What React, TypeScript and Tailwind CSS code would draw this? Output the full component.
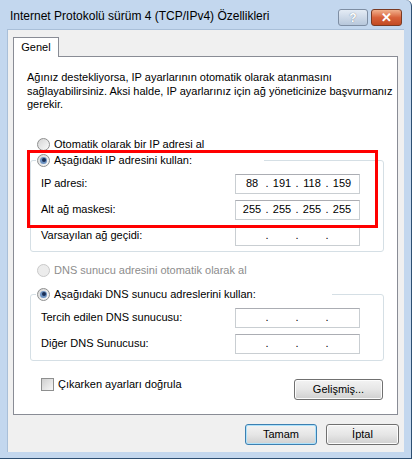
import type { ReactNode } from "react";

function Radio({ checked = false, disabled = false }: { checked?: boolean; disabled?: boolean }) {
  return (
    <span
      className={`flex h-[13px] w-[13px] shrink-0 items-center justify-center rounded-full border ${
        disabled
          ? "border-[#c9c9c9] bg-[#ececec]"
          : "border-[#8e8f8f] bg-gradient-to-br from-[#d5d5d5] to-[#fbfbfb]"
      }`}
    >
      {checked && (
        <span className="flex h-[7px] w-[7px] items-center justify-center rounded-full bg-[#6d93c2]">
          <span className="h-[4px] w-[4px] rounded-full bg-[#1a2f55]" />
        </span>
      )}
    </span>
  );
}

function IpInput({ parts }: { parts?: string[] }) {
  const p = parts ?? ["", "", "", ""];
  return (
    <div className="flex h-[20px] w-[125px] items-center border border-[#c9ced2] border-t-[#abadb3] bg-white pl-[4px] text-[11px] text-black">
      {p.map((v, i) => (
        <div key={i} className="flex items-center">
          <span className="w-[24px] text-center">{v}</span>
          {i < 3 && <span className="w-[6px] text-center">.</span>}
        </div>
      ))}
    </div>
  );
}

function Row({ label, parts }: { label: string; parts?: string[] }) {
  return (
    <div className="flex h-[20px] items-center justify-between pl-[10px] pr-[23px]">
      <span>{label}</span>
      <IpInput parts={parts} />
    </div>
  );
}

function Group({ title, legendWidth, children }: { title: string; legendWidth: string; children: ReactNode }) {
  return (
    <fieldset className="ml-[3px] w-[354px] rounded-[3px] border border-[#d5dfe5]">
      <legend className={`ml-[5px] flex h-[15px] items-center gap-[4px] bg-white pl-[1px] ${legendWidth}`}>
        <Radio checked />
        <span>{title}</span>
      </legend>
      {children}
    </fieldset>
  );
}

function WinButton({ label, primary = false, className = "" }: { label: string; primary?: boolean; className?: string }) {
  return (
    <button
      className={`flex h-[21px] items-center justify-center rounded-[3px] border bg-gradient-to-b from-[#f3f3f3] via-[#e6e6e6] to-[#d0d0d0] text-[11px] text-black ${
        primary ? "border-[#3c7fb1] shadow-[inset_0_0_0_1px_#aee2fb]" : "border-[#707070] shadow-[inset_0_0_0_1px_#fcfcfc]"
      } ${className}`}
    >
      {label}
    </button>
  );
}

export default function App() {
  return (
    <div className="h-[460px] w-[414px] bg-white font-['Liberation_Sans',Arial,sans-serif] text-[11px] text-black">
      <div className="flex h-[459px] w-[412px] flex-col rounded-tr-[6px] border-b border-r border-[#2e4f72] bg-[#c3d7ee]">
        {/* title bar */}
        <div className="flex h-[29px] items-start justify-between pl-[10px] pr-[9px]">
          <span className="mt-[9px] text-[12px] leading-[15px] text-black">
            Internet Protokolü sürüm 4 (TCP/IPv4) Özellikleri
          </span>
          <div className="mt-[9px] flex gap-[3px]">
            <div className="flex h-[17px] w-[30px] items-center justify-center rounded-[3px] border border-[#7e8ea3] bg-gradient-to-b from-[#e4ecf5] to-[#b7c7db] text-[12px] font-bold leading-none text-white [text-shadow:0_0_1px_#55657a]">
              ?
            </div>
            <div className="flex h-[17px] w-[31px] items-center justify-center rounded-[3px] border border-[#7a3a22] bg-gradient-to-b from-[#f0b08c] via-[#d8623a] to-[#c24a22] text-[13px] font-bold leading-none text-white">
              ✕
            </div>
          </div>
        </div>

        {/* client area */}
        <div className="ml-[7px] flex h-[423px] w-[397px] flex-col border-l border-t border-[#a9bfd8] bg-[#f0f0f0] pl-[5px] pt-[7px]">
          {/* tab */}
          <div className="relative z-10 -mb-px flex h-[20px] w-[46px] items-center justify-center border border-b-0 border-[#898c95] bg-white">
            Genel
          </div>

          {/* panel */}
          <div className="relative h-[359px] w-[385px] border border-[#898c95] bg-white pl-[13px] pt-[14px]">
            <p className="whitespace-nowrap leading-[13.5px]">
              Ağınız destekliyorsa, IP ayarlarının otomatik olarak atanmasını
              <br />
              sağlayabilirsiniz. Aksi halde, IP ayarlarınız için ağ yöneticinize başvurmanız
              <br />
              gerekir.
            </p>

            <div className="ml-[10px] mt-[26px] flex h-[13px] items-center gap-[4px]">
              <Radio />
              <span>Otomatik olarak bir IP adresi al</span>
            </div>

            <div className="mt-[2px]">
              <Group title="Aşağıdaki IP adresini kullan:" legendWidth="w-[228px]">
                <div className="flex flex-col gap-[6px] pb-[5px] pt-[6px]">
                  <Row label="IP adresi:" parts={["88", "191", "118", "159"]} />
                  <Row label="Alt ağ maskesi:" parts={["255", "255", "255", "255"]} />
                  <Row label="Varsayılan ağ geçidi:" />
                </div>
              </Group>
            </div>

            <div className="ml-[10px] mt-[12px] flex h-[13px] items-center gap-[4px] text-[#8d8d8d]">
              <Radio disabled />
              <span>DNS sunucu adresini otomatik olarak al</span>
            </div>

            <div className="mt-[10px]">
              <Group title="Aşağıdaki DNS sunucu adreslerini kullan:" legendWidth="w-[296px]">
                <div className="flex flex-col gap-[6px] pb-[6px] pt-[6px]">
                  <Row label="Tercih edilen DNS sunucusu:" />
                  <Row label="Diğer DNS Sunucusu:" />
                </div>
              </Group>
            </div>

            <div className="mt-[17px] flex items-start justify-between pl-[14px] pr-[14px]">
              <div className="flex h-[13px] items-center gap-[4px]">
                <span className="h-[13px] w-[13px] border border-[#8e8f8f] bg-gradient-to-br from-[#cfcfcf] to-[#f7f7f7]" />
                <span>Çıkarken ayarları doğrula</span>
              </div>
              <WinButton label="Gelişmiş..." className="mt-[1px] h-[20px] w-[89px]" />
            </div>

            {/* red highlight annotation */}
            <div className="pointer-events-none absolute left-[13px] top-[93px] h-[78px] w-[351px] border-[3px] border-[#ff0000]" />
          </div>

          {/* dialog buttons */}
          <div className="mt-[9px] flex justify-end gap-[9px] pr-[5px]">
            <WinButton label="Tamam" primary className="w-[72px]" />
            <WinButton label="İptal" className="w-[73px]" />
          </div>
        </div>
      </div>
    </div>
  );
}
